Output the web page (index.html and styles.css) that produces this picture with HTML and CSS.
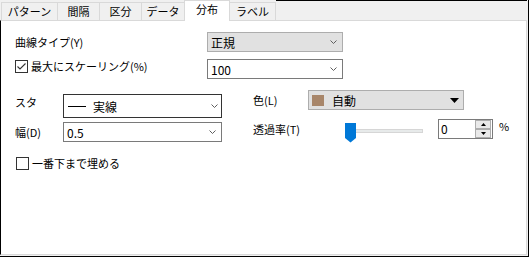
FILE: index.html
```html
<!DOCTYPE html>
<html lang="ja">
<head>
    <meta charset="UTF-8">
    <title>分布</title>
    <link rel="stylesheet" href="styles.css">
</head>
<body>
    <div class="window">
        <div class="tabs">
            <div class="tab tab-pattern">パターン</div>
            <div class="tab tab-interval">間隔</div>
            <div class="tab tab-class">区分</div>
            <div class="tab tab-data">データ</div>
            <div class="tab tab-dist active">分布</div>
            <div class="tab tab-label">ラベル</div>
            <div class="tabs-rest"></div>
        </div>

        <div class="panel">
            <div class="curve-grid">
                <div class="label">曲線タイプ(Y)</div>
                <div class="combo combo-gray">
                    <span>正規</span>
                    <svg class="chevron" width="7" height="4" viewBox="0 0 7 4"><path d="M0.5 0.5 L3.5 3.5 L6.5 0.5" fill="none" stroke="#5f5f5f" stroke-width="1"/></svg>
                </div>
                <label class="check check-max">
                    <span class="box">
                        <svg width="11" height="11" viewBox="0 0 11 11"><path d="M1.5 5.5 L4 8 L9.5 2.5" fill="none" stroke="#333" stroke-width="1.1"/></svg>
                    </span>
                    最大にスケーリング(%)
                </label>
                <div class="combo">
                    <span>100</span>
                    <svg class="chevron" width="7" height="4" viewBox="0 0 7 4"><path d="M0.5 0.5 L3.5 3.5 L6.5 0.5" fill="none" stroke="#5f5f5f" stroke-width="1"/></svg>
                </div>
            </div>

            <div class="line-section">
                <div class="left-col">
                    <div class="label label-top">スタ</div>
                    <div class="combo combo-focus">
                        <span class="line-value"><span class="line-sample"></span>実線</span>
                        <svg class="chevron" width="7" height="4" viewBox="0 0 7 4"><path d="M0.5 0.5 L3.5 3.5 L6.5 0.5" fill="none" stroke="#5f5f5f" stroke-width="1"/></svg>
                    </div>
                    <div class="label">幅(D)</div>
                    <div class="combo">
                        <span>0.5</span>
                        <svg class="chevron" width="7" height="4" viewBox="0 0 7 4"><path d="M0.5 0.5 L3.5 3.5 L6.5 0.5" fill="none" stroke="#5f5f5f" stroke-width="1"/></svg>
                    </div>
                </div>

                <div class="right-col">
                    <div class="label">色(L)</div>
                    <div class="color-combo">
                        <span class="swatch"></span>
                        <span>自動</span>
                        <svg class="drop-arrow" width="9" height="5" viewBox="0 0 9 5"><path d="M0 0 H9 L4.5 5 Z" fill="#000"/></svg>
                    </div>
                    <div class="label">透過率(T)</div>
                    <div class="alpha-row">
                        <svg class="slider" width="82" height="24" viewBox="0 0 82 24">
                            <rect x="8.5" y="10.5" width="71" height="3" fill="#e7eaea" stroke="#d6d6d6"/>
                            <path d="M2 4 H13 V19 L7.5 23.5 L2 19 Z" fill="#0078d7"/>
                        </svg>
                        <div class="spin">
                            <span class="spin-value">0</span>
                            <div class="spin-buttons">
                                <span class="spin-btn"><svg width="5" height="3" viewBox="0 0 5 3"><path d="M0 3 H5 L2.5 0 Z" fill="#000"/></svg></span>
                                <span class="spin-btn"><svg width="5" height="3" viewBox="0 0 5 3"><path d="M0 0 H5 L2.5 3 Z" fill="#000"/></svg></span>
                            </div>
                        </div>
                        <span class="unit">%</span>
                    </div>
                </div>
            </div>

            <label class="check check-fill">
                <span class="box"></span>
                一番下まで埋める
            </label>
        </div>
    </div>
</body>
</html>
```

FILE: styles.css
```css
* {
    box-sizing: border-box;
}
body {
    margin: 0;
    font-family: "Noto Sans CJK JP", "Noto Sans", sans-serif;
    font-size: 11px;
    color: #000;
    background: #f0f0f0;
}
.window {
    width: 529px;
    height: 257px;
    display: flex;
    flex-direction: column;
    border-right: 1px solid #000;
    border-bottom: 1px solid #000;
    padding: 0 1px 1px 0;
    background: #f0f0f0;
}

/* tabs */
.tabs {
    display: flex;
    align-items: flex-end;
    height: 20px;
    padding-left: 1px;
}
.tab {
    height: 18px;
    margin-left: -1px;
    border: 1px solid #d9d9d9;
    border-bottom: none;
    background: #f0f0f0;
    text-align: center;
    line-height: 16px;
}
.tab:first-child {
    margin-left: 0;
}
.tab-pattern { width: 57px; }
.tab-interval { width: 43px; }
.tab-class { width: 43px; }
.tab-data { width: 44px; }
.tab-dist { width: 46px; }
.tab-label { width: 47px; }
.tab.active {
    position: relative;
    height: 21px;
    margin-bottom: -1px;
    background: #fff;
}
.tabs-rest {
    flex: 1;
    align-self: stretch;
    border-top: 1px solid #000;
}

/* panel */
.panel {
    flex: 1;
    background: #fff;
    border: 1px solid #d9d9d9;
    border-left-color: #000;
    padding: 11px 0 0 14px;
}
.label {
    line-height: 14px;
    white-space: nowrap;
}
.curve-grid {
    display: grid;
    grid-template-columns: 192px 136px;
    grid-auto-rows: 20px;
    row-gap: 7px;
    align-items: center;
}
.combo {
    height: 20px;
    display: flex;
    align-items: center;
    justify-content: space-between;
    padding: 0 5px 0 3px;
    border: 1px solid #7a7a7a;
    background: #fff;
    font-size: 12px;
}
.combo-gray {
    background: #e1e1e1;
    border-color: #adadad;
}
.combo-focus {
    height: 24px;
    padding-left: 4px;
    padding-right: 3px;
    border-color: #333;
}
.line-value {
    display: flex;
    align-items: center;
}
.line-sample {
    width: 18px;
    height: 1px;
    margin-right: 7px;
    background: #000;
}

/* checkboxes */
.check {
    display: flex;
    align-items: center;
    gap: 3px;
    line-height: 13px;
    white-space: nowrap;
}
.box {
    width: 13px;
    height: 13px;
    display: flex;
    border: 1px solid #333;
    background: #fff;
}
.check-max {
    align-self: start;
    margin-top: 1px;
}
.check-fill {
    margin: 15px 0 0 1px;
}

/* line section */
.line-section {
    display: flex;
    margin-top: 11px;
}
.left-col {
    width: 207px;
    padding-top: 4px;
    display: grid;
    grid-template-columns: 48px 159px;
    grid-template-rows: 24px 20px;
    row-gap: 4px;
    align-items: center;
}
.label-top {
    align-self: start;
    padding-top: 1px;
}
.right-col {
    margin-left: 31px;
    display: grid;
    grid-template-columns: 55px auto;
    grid-template-rows: 20px 20px;
    row-gap: 9px;
    align-items: center;
}
.color-combo {
    width: 156px;
    height: 20px;
    display: flex;
    align-items: center;
    padding: 0 4px 0 3px;
    border: 1px solid #adadad;
    background: #e1e1e1;
    font-size: 12px;
}
.swatch {
    width: 12px;
    height: 11px;
    margin-right: 8px;
    background: #a8866a;
}
.drop-arrow {
    margin-left: auto;
}
.alpha-row {
    display: flex;
    align-items: flex-start;
    height: 20px;
}
.slider {
    margin-left: 35px;
}
.spin {
    width: 55px;
    height: 20px;
    margin-left: 13px;
    display: flex;
    justify-content: space-between;
    border: 1px solid #7a7a7a;
    background: #fff;
    font-size: 12px;
}
.spin-value {
    padding-left: 2px;
    line-height: 18px;
}
.spin-buttons {
    display: flex;
    flex-direction: column;
    margin-right: 1px;
}
.spin-btn {
    width: 16px;
    height: 9px;
    display: flex;
    align-items: center;
    justify-content: center;
    border: 1px solid #adadad;
    background: #e9e9e9;
}
.unit {
    margin-left: 6px;
    line-height: 14px;
}
```
